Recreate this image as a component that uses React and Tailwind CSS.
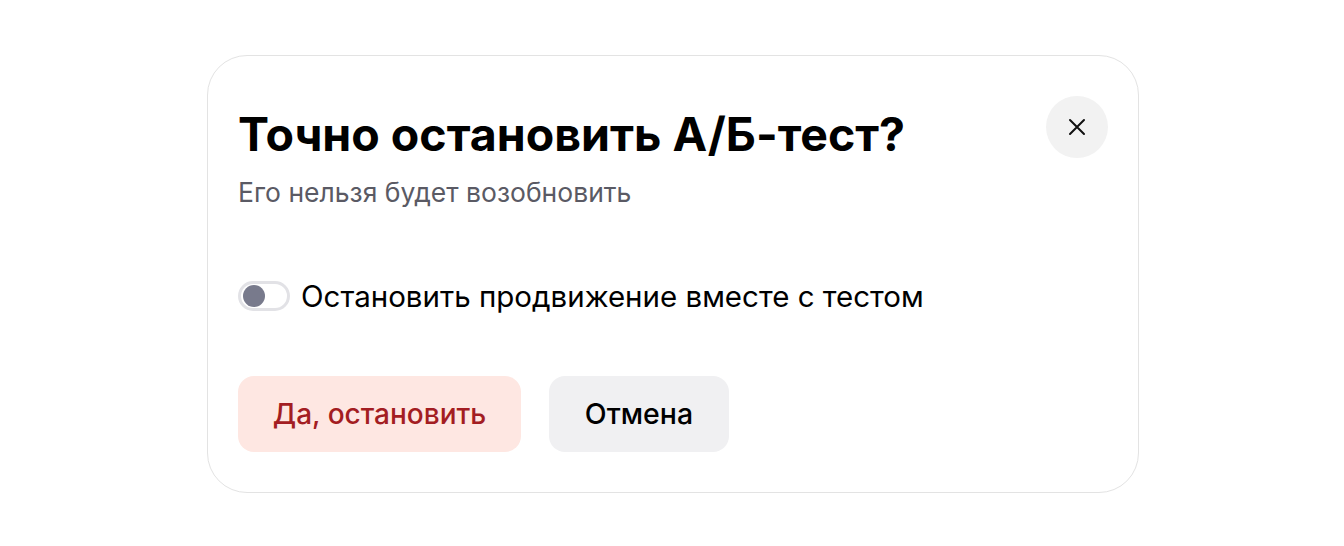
export default function App() {
  return (
    <div className="w-[1344px] h-[546px] bg-white flex items-start justify-center pt-[55px] pl-[2px]" style={{ fontFamily: 'Inter, "Noto Sans", sans-serif' }}>
      <div className="w-[932px] h-[438px] rounded-[40px] border border-[#e3e3e3] bg-white px-[30px] pt-[40px] pb-[40px] flex flex-col">
        <div className="flex justify-between items-start">
          <div className="flex flex-col">
            <h1 className="mt-[10px] text-[46.5px] leading-[56px] font-bold text-black">Точно остановить А/Б-тест?</h1>
            <p className="mt-[14px] text-[26.5px] leading-[32px] text-[#5a5a64]">Его нельзя будет возобновить</p>
          </div>
          <button className="w-[62px] h-[62px] rounded-full bg-[#f2f2f2] flex items-center justify-center">
            <svg width="18" height="18" viewBox="0 0 18 18" fill="none" stroke="#111" strokeWidth="2" strokeLinecap="round">
              <path d="M2 2L16 16M16 2L2 16" />
            </svg>
          </button>
        </div>
        <div className="mt-[71px] flex items-center gap-[11px] h-[34px]">
          <div className="w-[52px] h-[30px] rounded-full border-[3px] border-[#e2e2e6] bg-white flex items-center pl-[2px]">
            <div className="w-[22px] h-[22px] rounded-full bg-[#787a8c]" />
          </div>
          <span className="text-[29.5px] leading-[34px] text-black">Остановить продвижение вместе с тестом</span>
        </div>
        <div className="mt-[63px] flex gap-[28px]">
          <button className="w-[283px] h-[76px] rounded-[16px] bg-[#fee7e2] text-[#a31d22] text-[28px] font-medium">Да, остановить</button>
          <button className="w-[180px] h-[76px] rounded-[16px] bg-[#f0f0f2] text-black text-[28.5px] font-medium">Отмена</button>
        </div>
      </div>
    </div>
  );
}
